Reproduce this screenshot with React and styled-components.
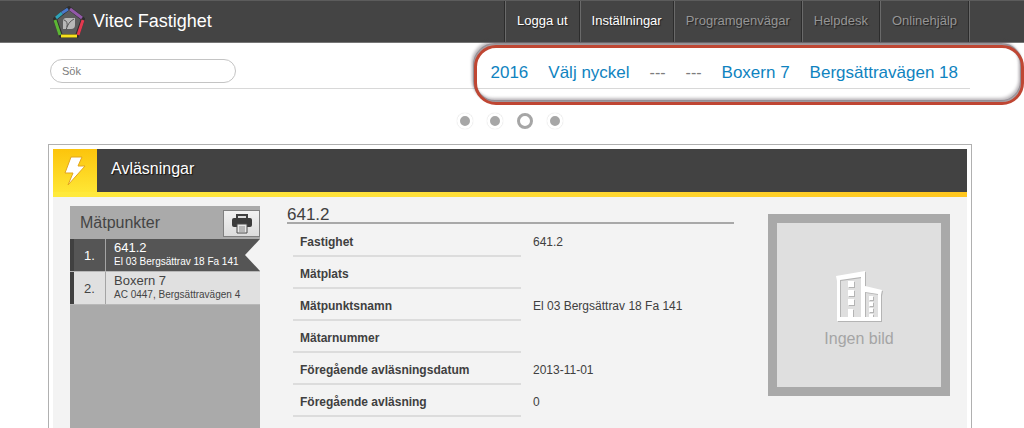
import styled, { createGlobalStyle } from 'styled-components'

const GlobalStyle = createGlobalStyle`
	* {
		box-sizing: border-box;
	}
	body {
		margin: 0;
		background-color: white;
		color: #404040;
		font-family: 'Liberation Sans', Arial, sans-serif;
		font-size: 12px;
	}
`

const Page = styled.div`
	display: flex;
	flex-direction: column;
	height: 100vh;
	overflow: hidden;
`

const TopBar = styled.header`
	display: flex;
	justify-content: space-between;
	flex-shrink: 0;
	height: 43px;
	padding: 0 55px 0 52px;
	background-color: #444;
	border-top: 1px solid #5c5c5c;
	border-bottom: 1px solid #767676;
`
const Brand = styled.a`
	display: flex;
	align-items: center;
	gap: 8px;
	color: white;
	font-size: 18px;
	text-decoration: none;
`
const Nav = styled.nav`
	display: flex;
	border-left: 1px solid #2c2c2c;
`
const NavLink = styled.a`
	display: flex;
	align-items: center;
	padding: 0 11px 2px;
	color: ${props => (props.$muted ? '#969696' : 'white')};
	font-size: 13px;
	text-decoration: none;
	text-shadow: 1px 1px 1px #222;
	border-left: 1px solid #6a6a6a;
	border-right: 1px solid #2c2c2c;
	&:last-child {
		box-shadow: 1px 0 #6a6a6a;
	}
`

const Toolbar = styled.div`
	position: relative;
	display: flex;
	align-items: center;
	justify-content: space-between;
	flex-shrink: 0;
	height: 46px;
	margin: 0 54px 0 50px;
	padding-top: 11px;
	border-bottom: 1px solid #d8d8d8;
`
const SearchInput = styled.input`
	width: 186px;
	height: 24px;
	padding: 0 11px;
	color: #404040;
	font-family: inherit;
	font-size: 11px;
	background-color: white;
	border: 1px solid #c4c4c4;
	border-radius: 12px;
	outline: none;
	&::placeholder {
		color: #7c7c7c;
	}
`
const Crumbs = styled.nav`
	display: flex;
	align-items: center;
	gap: 20px;
	padding: 4px 12px 0 0;
`
const Crumb = styled.a`
	color: ${props => (props.$empty ? '#7d7d7d' : '#0f83c0')};
	font-size: ${props => (props.$empty ? '16px' : '17px')};
	line-height: 20px;
	text-decoration: none;
`
const Highlight = styled.div`
	position: absolute;
	top: 2px;
	left: 424px;
	right: -54px;
	height: 60px;
	border: 3px solid #bf4633;
	border-radius: 22px;
	filter: drop-shadow(-1px -2px 0 rgba(80, 70, 80, 0.4)) drop-shadow(-2px -3px 1px rgba(80, 70, 80, 0.4));
	pointer-events: none;
`

const Pager = styled.div`
	display: flex;
	align-items: center;
	justify-content: center;
	gap: 14px;
	flex-shrink: 0;
	height: 55px;
	padding: 8px 5px 0 0;
`
const Dot = styled.button`
	width: 16px;
	height: 16px;
	padding: 0;
	background-color: ${props => (props.$active ? 'white' : '#a6a6a6')};
	border: 3px solid ${props => (props.$active ? '#a6a6a6' : 'white')};
	border-radius: 50%;
	box-shadow: ${props => (props.$active ? 'none' : '0 0 1px #c8c8c8')};
`

const Panel = styled.main`
	display: flex;
	flex-direction: column;
	flex: 1;
	margin: 0 52px 0 48px;
	padding: 4px 4px 0;
	border: solid #b0b0b0;
	border-width: 1px 1px 0;
`
const PanelHeader = styled.div`
	display: flex;
	height: 48px;
	padding-bottom: 5px;
	background: linear-gradient(to right, #ffea3c, #ffe03a 40%, #ffc61e);
`
const PanelIcon = styled.div`
	display: flex;
	align-items: center;
	justify-content: center;
	width: 44px;
	background: linear-gradient(#fcc40c, #ffe634);
`
const PanelTitle = styled.h1`
	flex: 1;
	margin: 0;
	padding: 0 14px;
	color: white;
	background-color: #424242;
	font-size: 16px;
	font-weight: normal;
	line-height: 40px;
	text-shadow: 1px 1px 1px #111;
`
const PanelBody = styled.div`
	display: flex;
	align-items: stretch;
	flex: 1;
	padding: 9px 17px 0;
	background-color: #f3f3f3;
`

const Sidebar = styled.aside`
	width: 190px;
	background-color: #aaa;
`
const SidebarHeader = styled.div`
	display: flex;
	align-items: center;
	justify-content: space-between;
	height: 33px;
	padding-left: 10px;
`
const SidebarTitle = styled.h2`
	margin: 0;
	color: #444;
	font-size: 16px;
	font-weight: normal;
`
const PrintButton = styled.button`
	display: flex;
	align-items: center;
	justify-content: center;
	width: 37px;
	height: 27px;
	margin-top: 2px;
	padding: 0;
	background: linear-gradient(#f2f2f2, #dcdcdc);
	border: 1px solid #808080;
`
const PointList = styled.ol`
	margin: 0;
	padding: 0;
	list-style: none;
`
const PointItem = styled.li`
	position: relative;
	display: flex;
	height: 33px;
	color: ${props => (props.$active ? 'white' : '#444')};
	background-color: ${props => (props.$active ? '#555' : '#e0e0e0')};
	border-bottom: 1px solid #b8b8b8;
	box-shadow: inset 4px 0 #404040;
`
const PointNumber = styled.span`
	width: 36px;
	padding-left: 4px;
	font-size: 13px;
	line-height: 33px;
	text-align: center;
	border-right: 1px solid #a4a4a4;
`
const PointLink = styled.a`
	display: flex;
	flex-direction: column;
	padding: 2px 0 0 8px;
	color: inherit;
	font-size: 10px;
	line-height: 14px;
	text-decoration: none;
	white-space: nowrap;
`
const PointName = styled.span`
	font-size: 13px;
`
const Notch = styled.span`
	position: absolute;
	top: 0;
	right: 0;
	border: solid transparent;
	border-width: 16px 15px 16px 0;
	border-right-color: #f3f3f3;
`

const Details = styled.section`
	flex: 1;
	margin: 0 34px 0 27px;
`
const DetailsTitle = styled.h2`
	height: 18px;
	margin: 0;
	font-size: 17px;
	font-weight: normal;
	line-height: 17px;
	border-bottom: 2px solid #a8a8a8;
`
const DetailsTable = styled.table`
	margin-left: 6px;
	border-collapse: collapse;
	font-size: 12px;
	line-height: 14px;
`
const Label = styled.th`
	width: 228px;
	height: 32px;
	padding: 4px 7px 0;
	text-align: left;
	border-bottom: 2px solid #dcdcdc;
`
const Value = styled.td`
	padding: 4px 12px 0;
	white-space: nowrap;
`

const NoImage = styled.div`
	display: flex;
	flex-direction: column;
	align-items: center;
	justify-content: center;
	gap: 6px;
	width: 182px;
	height: 182px;
	margin-top: 8px;
	padding-top: 8px;
	color: #a5a5a5;
	background-color: #dfdfdf;
	border: 9px solid #a9a9a9;
	font-size: 16px;
	line-height: 20px;
`

const Logo = () => (
	<svg width="33" height="34" viewBox="0 0 33 34" aria-hidden="true">
		<path d="M17 3 31 14 25 31H9L3 14Z" fill="#5c5c5c" stroke="#2e2e2e" strokeWidth="4" strokeLinejoin="round" />
		<g fill="none" strokeWidth="3">
			<path d="M4 13 10 8" stroke="#2fa3b8" />
			<path d="M10 8 16 4" stroke="#4a79cc" />
			<path d="M18 4 30 13" stroke="#9259a8" />
			<path d="M31 15 26 30" stroke="#e2394f" />
			<path d="M9 31H25" stroke="#f8e11c" />
			<path d="M3 15 8 30" stroke="#5cb534" />
		</g>
		<path d="M14 13H23V20Q23 24 19 24H11V17Q11 13 14 13Z" fill="#b8b8b8" />
		<path d="M14 25Q16 17 22 14M12 15Q16 16 15 22" fill="none" stroke="#555" />
	</svg>
)

const Bolt = () => (
	<svg width="22" height="32" viewBox="0 0 22 32" aria-hidden="true">
		<path d="M7 2H18L14 11H21L4 30 9 18H1Z" fill="white" stroke="#e2a51c" />
	</svg>
)

const Printer = () => (
	<svg width="20" height="20" viewBox="0 0 20 20" aria-hidden="true">
		<path d="M5 1H15V5H5Z" fill="#ddd" stroke="#404040" strokeWidth="2" />
		<rect x="0" y="4" width="20" height="9" rx="2" fill="#3c3c3c" />
		<path d="M5 10H15V19H5Z" fill="#e8e8e8" stroke="#4c4c4c" />
		<path d="M7 13H13M7 15H13M7 17H13" stroke="#888" />
	</svg>
)

// walls, roofs and doors, the openings are cut out by the evenodd rule
const buildingOutline =
	'M1 6 30 1V16L47 20 46 25V51H2V11ZM5 10V47H13V39H18V47H26V7ZM30 22V47H34V44H38V47H43V24Z'
const buildingWindows =
	'M13 11h6v6h-6zM13 20h6v6h-6zM13 29h6v6h-6zM34 26h4v4h-4zM34 32h4v4h-4zM34 38h4v4h-4z'

const Buildings = () => (
	<svg width="48" height="53" viewBox="0 0 48 53" aria-hidden="true">
		<g fill="#b4b4b4" transform="translate(1 1)">
			<path d={buildingOutline} fillRule="evenodd" />
			<path d={buildingWindows} />
		</g>
		<path d={buildingOutline} fill="white" fillRule="evenodd" />
		<path d={buildingWindows} fill="white" />
	</svg>
)

const navLinks = [
	{ text: 'Logga ut' },
	{ text: 'Inställningar' },
	{ text: 'Programgenvägar', muted: true },
	{ text: 'Helpdesk', muted: true },
	{ text: 'Onlinehjälp', muted: true },
]

const crumbs = ['2016', 'Välj nyckel', '---', '---', 'Boxern 7', 'Bergsättravägen 18']

const points = [
	{ name: '641.2', address: 'El 03 Bergsättrav 18 Fa 141' },
	{ name: 'Boxern 7', address: 'AC 0447, Bergsättravägen 4' },
]

const details = [
	['Fastighet', '641.2'],
	['Mätplats', ''],
	['Mätpunktsnamn', 'El 03 Bergsättrav 18 Fa 141'],
	['Mätarnummer', ''],
	['Föregående avläsningsdatum', '2013-11-01'],
	['Föregående avläsning', '0'],
]

const App = () => (
	<Page>
		<GlobalStyle />
		<TopBar>
			<Brand href="#">
				<Logo />
				Vitec Fastighet
			</Brand>
			<Nav>
				{navLinks.map(link => (
					<NavLink key={link.text} href="#" $muted={link.muted}>
						{link.text}
					</NavLink>
				))}
			</Nav>
		</TopBar>

		<Toolbar>
			<SearchInput type="text" placeholder="Sök" aria-label="Sök" />
			<Crumbs>
				{crumbs.map((crumb, i) => (
					<Crumb key={i} href="#" $empty={crumb === '---'}>
						{crumb}
					</Crumb>
				))}
			</Crumbs>
			<Highlight />
		</Toolbar>

		<Pager>
			{[1, 2, 3, 4].map(n => (
				<Dot key={n} $active={n === 3} aria-label={`Sida ${n}`} />
			))}
		</Pager>

		<Panel>
			<PanelHeader>
				<PanelIcon>
					<Bolt />
				</PanelIcon>
				<PanelTitle>Avläsningar</PanelTitle>
			</PanelHeader>
			<PanelBody>
				<Sidebar>
					<SidebarHeader>
						<SidebarTitle>Mätpunkter</SidebarTitle>
						<PrintButton aria-label="Skriv ut">
							<Printer />
						</PrintButton>
					</SidebarHeader>
					<PointList>
						{points.map((point, i) => (
							<PointItem key={point.name} $active={i === 0}>
								<PointNumber>{i + 1}.</PointNumber>
								<PointLink href="#">
									<PointName>{point.name}</PointName>
									{point.address}
								</PointLink>
								{i === 0 && <Notch />}
							</PointItem>
						))}
					</PointList>
				</Sidebar>
				<Details>
					<DetailsTitle>641.2</DetailsTitle>
					<DetailsTable>
						<tbody>
							{details.map(([label, value]) => (
								<tr key={label}>
									<Label scope="row">{label}</Label>
									<Value>{value}</Value>
								</tr>
							))}
						</tbody>
					</DetailsTable>
				</Details>
				<NoImage>
					<Buildings />
					Ingen bild
				</NoImage>
			</PanelBody>
		</Panel>
	</Page>
)

export default App
